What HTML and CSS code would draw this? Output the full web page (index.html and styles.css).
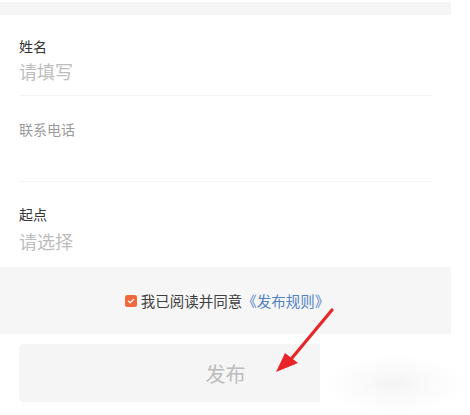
FILE: index.html
```html
<!DOCTYPE html>
<html lang="zh-CN">
<head>
<meta charset="utf-8">
<title>发布</title>
<link rel="stylesheet" href="styles.css">
</head>
<body>
<div class="page">
  <div class="top-band"></div>
  <div class="card">
    <div class="field f1">
      <div class="label">姓名</div>
      <div class="value">请填写</div>
    </div>
    <div class="divider"></div>
    <div class="field f2">
      <div class="label muted">联系电话</div>
    </div>
    <div class="divider"></div>
    <div class="field f3">
      <div class="label">起点</div>
      <div class="value">请选择</div>
    </div>
  </div>
  <div class="agree">
    <span class="check">
      <svg width="12" height="12" viewBox="0 0 12 12"><rect width="12" height="12" rx="2.5" fill="#f2683d"/><path d="M3.4 6.1 L5.2 7.8 L8.6 4.4" fill="none" stroke="#fff" stroke-width="1.3" stroke-linecap="round" stroke-linejoin="round"/></svg>
    </span>
    <span class="agree-text">我已阅读并同意</span><span class="rule">《发布规则》</span>
  </div>
  <div class="btn-wrap">
    <div class="btn">发布</div>
  </div>
</div>
<div class="watermark"></div>
<svg class="arrow" width="80" height="80" viewBox="0 0 80 80">
  <line x1="62" y1="8" x2="22" y2="56" stroke="#e8262a" stroke-width="3.2" stroke-linecap="round"/>
  <polygon points="6,70 15,51 28,61" fill="#e8262a"/>
</svg>
</body>
</html>
```
FILE: styles.css
```css
html, body {
  margin: 0;
  padding: 0;
  background: #ffffff;
}
body {
  font-family: "Noto Sans CJK SC", "Noto Sans", sans-serif;
  width: 470px;
  height: 415px;
  overflow: hidden;
  position: relative;
}
.page {
  width: 451px;
  padding-top: 2px;
}
.top-band {
  height: 13px;
  background: #f5f5f5;
}
.card {
  background: #ffffff;
  padding: 0 18px 0 19px;
}
.field {
  display: flex;
  flex-direction: column;
  box-sizing: border-box;
}
.f1 {
  height: 80px;
  padding-top: 21px;
}
.f2 {
  height: 85px;
  padding-top: 23px;
}
.f3 {
  height: 85px;
  padding-top: 22px;
}
.label {
  font-size: 14px;
  line-height: 20px;
  color: #333333;
}
.label.muted {
  color: #9a9a9a;
}
.value {
  font-size: 18px;
  line-height: 24px;
  color: #bdbdbd;
  margin-top: 3px;
}
.f3 .value {
  margin-top: 5px;
}
.divider {
  height: 1px;
  background: #f3f3f3;
}
.agree {
  height: 67px;
  background: #f6f6f6;
  display: flex;
  align-items: center;
  justify-content: center;
  font-size: 14.5px;
  line-height: 20px;
  padding-left: 3px;
  box-sizing: border-box;
}
.check {
  display: flex;
  width: 12px;
  height: 12px;
  margin-right: 4px;
}
.agree-text {
  color: #404040;
}
.rule {
  color: #5281c4;
}
.btn-wrap {
  padding: 10px 19px 0 19px;
}
.btn {
  height: 58px;
  border-radius: 5px;
  background: #f5f5f5;
  color: #bcbcbc;
  font-size: 20px;
  display: flex;
  align-items: center;
  justify-content: center;
}
.watermark {
  position: absolute;
  left: 320px;
  top: 336px;
  width: 150px;
  height: 79px;
  background: radial-gradient(ellipse 70px 30px at 75px 48px, #f4f4f4 0%, #fbfbfb 55%, #ffffff 100%);
}
.arrow {
  position: absolute;
  left: 270px;
  top: 302px;
}
```
